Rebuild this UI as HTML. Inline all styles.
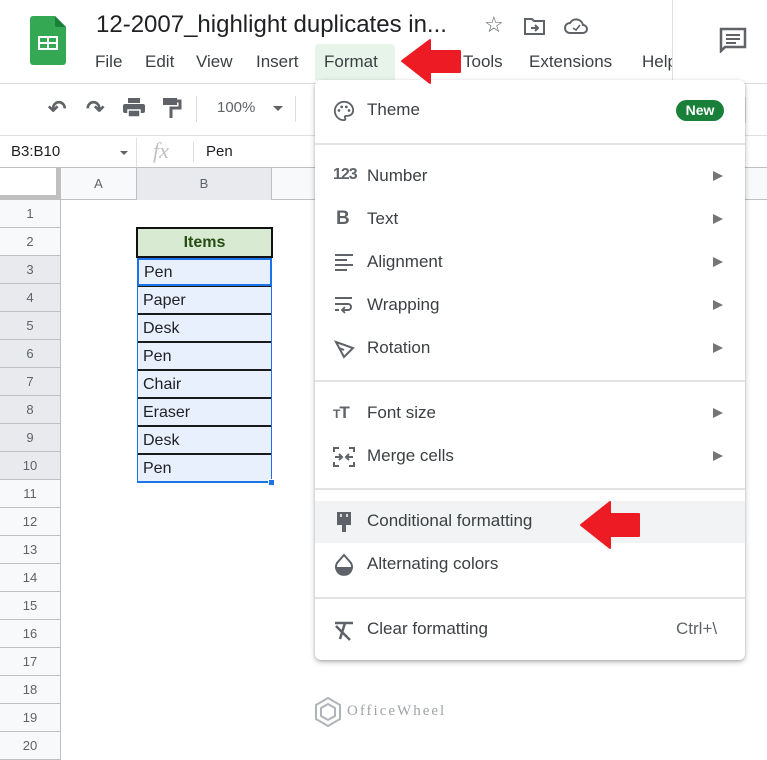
<!DOCTYPE html>
<html><head><meta charset="utf-8"><style>
*{margin:0;padding:0;box-sizing:border-box}
body{width:767px;height:750px;overflow:hidden;background:#fff;font-family:"Liberation Sans",Arial,sans-serif;position:relative;color:#3c4043}
.a{position:absolute}
.rh{position:absolute;left:0;width:61px;height:28px;border-bottom:1px solid #c0c0c0;border-right:1px solid #c0c0c0;background:#f8f9fa;font-size:13px;color:#5f6368;text-align:center;line-height:28px}
.rh.s{background:#e8eaed}
.cell{position:absolute;left:137px;width:135px;height:28px;background:#e8f0fe;border:1px solid #1a1a1a;font-size:16px;line-height:28px;padding-left:5px;color:#202124}
.mi{position:absolute;left:367px;font-size:17px;color:#3c4043}
.ar{position:absolute;left:713px;width:0;height:0;border-left:10px solid #757575;border-top:5px solid transparent;border-bottom:5px solid transparent}
.sep{position:absolute;left:315px;width:430px;height:2px;background:#e3e3e3}
.ic{position:absolute;left:333px}
</style></head><body>
<svg class="a" style="left:30px;top:16px" width="36" height="49" viewBox="0 0 36 49"><path d="M3 0H25L36 11V46a3 3 0 0 1-3 3H3a3 3 0 0 1-3-3V3a3 3 0 0 1 3-3z" fill="#34a853"/><path d="M25 0L36 11H27a2 2 0 0 1-2-2z" fill="#188038"/><rect x="8" y="20" width="20" height="14" fill="#fff"/><rect x="10" y="22" width="7" height="4" fill="#34a853"/><rect x="19" y="22" width="7" height="4" fill="#34a853"/><rect x="10" y="28" width="7" height="4" fill="#34a853"/><rect x="19" y="28" width="7" height="4" fill="#34a853"/></svg>
<div class="a" style="left:96px;top:11px;font-size:24px;color:#202124">12-2007_highlight duplicates in...</div>
<div class="a" style="left:484px;top:12px;font-size:22px;color:#5f6368">☆</div>
<svg class="a" style="left:524px;top:17px" width="22" height="18"><path d="M1 2h7l2 2h10v13H1z" fill="none" stroke="#5f6368" stroke-width="2"/><path d="M7 11h7M11 8l3 3-3 3" fill="none" stroke="#5f6368" stroke-width="2"/></svg>
<svg class="a" style="left:564px;top:17px" width="24" height="18"><path d="M6 16a5 5 0 0 1 0-10 7 7 0 0 1 13 2 4 4 0 0 1 0 8z" fill="none" stroke="#5f6368" stroke-width="2"/><path d="M9 11l3 2 4-5" fill="none" stroke="#5f6368" stroke-width="1.6"/></svg>
<div class="a" style="left:315px;top:44px;width:80px;height:36px;background:#e6f4ea;border-radius:4px 4px 0 0"></div>
<div class="a" style="left:95px;top:52px;font-size:17px;color:#3c4043"><span style="position:absolute;left:0">File</span><span style="position:absolute;left:50px">Edit</span><span style="position:absolute;left:101px">View</span><span style="position:absolute;left:161px">Insert</span><span style="position:absolute;left:229px">Format</span><span style="position:absolute;left:368px">Tools</span><span style="position:absolute;left:434px">Extensions</span><span style="position:absolute;left:547px;white-space:nowrap">Help</span></div>
<div class="a" style="left:672px;top:0;width:95px;height:84px;background:#fff;border-left:1px solid #e0e0e0"></div>
<svg class="a" style="left:719px;top:27px" width="28" height="26"><path d="M2 2h24v18H6l-4 4z" fill="none" stroke="#5f6368" stroke-width="2.5"/><path d="M7 8h14M7 12h14M7 16h10" stroke="#5f6368" stroke-width="2"/></svg>
<div class="a" style="left:0;top:83px;width:767px;height:1px;background:#dadce0"></div>
<div class="a" style="left:48px;top:96px;font-size:22px;color:#5f6368;font-weight:bold">↶</div>
<div class="a" style="left:86px;top:96px;font-size:22px;color:#5f6368;font-weight:bold">↷</div>
<svg class="a" style="left:123px;top:98px" width="22" height="20"><rect x="5" y="0" width="12" height="5" fill="#5f6368"/><rect x="0" y="6" width="22" height="9" rx="2" fill="#5f6368"/><rect x="5" y="12" width="12" height="7" fill="#5f6368" stroke="#fff" stroke-width="1.5"/></svg>
<svg class="a" style="left:162px;top:97px" width="20" height="22"><rect x="1" y="1" width="14" height="7" fill="#5f6368"/><path d="M15 4h3v7H9v10" fill="none" stroke="#5f6368" stroke-width="3"/></svg>
<div class="a" style="left:196px;top:96px;width:1px;height:26px;background:#dadce0"></div>
<div class="a" style="left:217px;top:99px;font-size:15px;color:#5f6368">100%</div>
<div class="a" style="left:273px;top:106px;border-top:5px solid #5f6368;border-left:5px solid transparent;border-right:5px solid transparent"></div>
<div class="a" style="left:295px;top:96px;width:1px;height:26px;background:#dadce0"></div>
<div class="a" style="left:745px;top:97px;width:1px;height:26px;background:#dadce0"></div>
<div class="a" style="left:0;top:135px;width:767px;height:1px;background:#e0e0e0"></div>
<div class="a" style="left:11px;top:143px;font-size:15px;color:#202124">B3:B10</div>
<div class="a" style="left:120px;top:151px;border-top:4px solid #5f6368;border-left:4px solid transparent;border-right:4px solid transparent"></div>
<div class="a" style="left:136px;top:138px;width:1px;height:30px;background:#e0e0e0"></div>
<div class="a" style="left:153px;top:138px;font-size:22px;color:#c0c0c0;font-style:italic;font-family:'Liberation Serif',serif">fx</div>
<div class="a" style="left:193px;top:142px;width:1px;height:20px;background:#dadce0"></div>
<div class="a" style="left:206px;top:143px;font-size:15px;color:#202124">Pen</div>
<div class="a" style="left:0;top:167px;width:767px;height:1px;background:#c0c0c0"></div>
<div class="a" style="left:0;top:168px;width:767px;height:32px;background:#f8f9fa;border-bottom:1px solid #c0c0c0"></div>
<div class="a" style="left:0;top:168px;background:#fff;border-right:5px solid #c0c0c0;border-bottom:5px solid #c0c0c0;width:61px;height:32px"></div>
<div class="a" style="left:61px;top:168px;width:76px;height:32px;border-right:1px solid #c0c0c0;text-align:center;line-height:32px;font-size:13px;color:#5f6368">A</div>
<div class="a" style="left:137px;top:168px;width:135px;height:32px;background:#e8eaed;border-right:1px solid #c0c0c0;text-align:center;line-height:32px;font-size:13px;color:#5f6368">B</div>
<div class="rh" style="top:200px">1</div><div class="rh" style="top:228px">2</div>
<div class="rh s" style="top:256px">3</div><div class="rh s" style="top:284px">4</div><div class="rh s" style="top:312px">5</div><div class="rh s" style="top:340px">6</div><div class="rh s" style="top:368px">7</div><div class="rh s" style="top:396px">8</div><div class="rh s" style="top:424px">9</div><div class="rh s" style="top:452px">10</div>
<div class="rh" style="top:480px">11</div><div class="rh" style="top:508px">12</div><div class="rh" style="top:536px">13</div><div class="rh" style="top:564px">14</div><div class="rh" style="top:592px">15</div><div class="rh" style="top:620px">16</div><div class="rh" style="top:648px">17</div><div class="rh" style="top:676px">18</div><div class="rh" style="top:704px">19</div><div class="rh" style="top:732px">20</div>
<div class="a" style="left:136px;top:227px;width:137px;height:31px;background:#d9ead3;border:2px solid #111;text-align:center;font-weight:bold;font-size:16px;line-height:27px;color:#274e13">Items</div>
<div class="cell" style="top:258px;border:2px solid #1a73e8;line-height:25px">Pen</div>
<div class="cell" style="top:286px">Paper</div>
<div class="cell" style="top:314px">Desk</div>
<div class="cell" style="top:342px">Pen</div>
<div class="cell" style="top:370px">Chair</div>
<div class="cell" style="top:398px">Eraser</div>
<div class="cell" style="top:426px">Desk</div>
<div class="cell" style="top:454px;border-bottom:1px solid #1a73e8">Pen</div>
<div class="a" style="left:137px;top:258px;width:135px;height:225px;border:1px solid #1a73e8"></div>
<div class="a" style="left:268px;top:479px;width:7px;height:7px;background:#1a73e8;border:1px solid #fff"></div>
<div class="a" style="left:315px;top:80px;width:430px;height:580px;background:#fff;border-radius:6px;box-shadow:0 2px 6px rgba(0,0,0,.25),0 1px 2px rgba(0,0,0,.15)"></div>
<div class="a" style="left:315px;top:501px;width:430px;height:42px;background:#f1f3f4"></div>
<svg class="ic" style="top:100px" width="22" height="22" viewBox="0 0 24 24"><path d="M12 2a10 10 0 0 0 0 20c1 0 1.5-.7 1.5-1.5 0-.8-.6-1.1-.6-1.8 0-.8.6-1.4 1.4-1.4H16a6 6 0 0 0 6-6C22 6 17.5 2 12 2z" fill="none" stroke="#5f6368" stroke-width="2"/><circle cx="6.5" cy="11.5" r="1.5" fill="#5f6368"/><circle cx="9.5" cy="7.5" r="1.5" fill="#5f6368"/><circle cx="14.5" cy="7.5" r="1.5" fill="#5f6368"/><circle cx="17.5" cy="11.5" r="1.5" fill="#5f6368"/></svg>
<div class="mi" style="top:100px">Theme</div>
<div class="a" style="left:676px;top:100px;width:48px;height:21px;border-radius:11px;background:#188038;color:#fff;font-weight:bold;font-size:14px;text-align:center;line-height:21px">New</div>
<div class="sep" style="top:143px"></div>
<div class="ic" style="top:166px;font-size:16px;font-weight:bold;color:#5f6368;letter-spacing:-1px">123</div>
<div class="mi" style="top:166px">Number</div><div class="ar" style="top:171px"></div>
<div class="ic" style="top:208px;left:336px;font-size:19px;font-weight:bold;color:#5f6368">B</div>
<div class="mi" style="top:209px">Text</div><div class="ar" style="top:214px"></div>
<svg class="ic" style="top:252px" width="22" height="20"><path d="M2 3h18M2 8h12M2 13h18M2 18h12" stroke="#5f6368" stroke-width="2"/></svg>
<div class="mi" style="top:252px">Alignment</div><div class="ar" style="top:257px"></div>
<svg class="ic" style="top:295px" width="22" height="20"><path d="M2 3h17M2 9h13a3 3 0 0 1 0 6h-5M2 15h4" fill="none" stroke="#5f6368" stroke-width="2"/><path d="M12 12l-3 3 3 3" fill="none" stroke="#5f6368" stroke-width="1.8"/></svg>
<div class="mi" style="top:295px">Wrapping</div><div class="ar" style="top:300px"></div>
<svg class="ic" style="top:337px" width="22" height="22"><path d="M3 5l17 6-9 9zM6 11l5 2" fill="none" stroke="#5f6368" stroke-width="2"/></svg>
<div class="mi" style="top:338px">Rotation</div><div class="ar" style="top:343px"></div>
<div class="sep" style="top:380px"></div>
<div class="ic" style="top:403px;font-size:17px;font-weight:bold;color:#5f6368;letter-spacing:-1px"><span style="font-size:12px">T</span>T</div>
<div class="mi" style="top:403px">Font size</div><div class="ar" style="top:408px"></div>
<svg class="ic" style="top:446px" width="22" height="22"><path d="M1 6V2h5M21 6V2h-5M1 16v4h5M21 16v4h-5M2 11h7M6 8l3 3-3 3M20 11h-7M16 8l-3 3 3 3" fill="none" stroke="#5f6368" stroke-width="2"/></svg>
<div class="mi" style="top:446px">Merge cells</div><div class="ar" style="top:451px"></div>
<div class="sep" style="top:488px"></div>
<svg class="ic" style="top:511px" width="22" height="22"><path d="M4 1h14v10H4z" fill="#5f6368"/><path d="M8 3v3M14 3v3" stroke="#fff" stroke-width="1.5"/><path d="M4 11h14v3H4z" fill="#5f6368"/><rect x="9" y="14" width="4" height="7" fill="#5f6368"/></svg>
<div class="mi" style="top:511px">Conditional formatting</div>
<svg class="ic" style="top:553px" width="22" height="24"><path d="M11 2L4 10a8 8 0 1 0 14 0z" fill="none" stroke="#5f6368" stroke-width="2"/><path d="M3 14h16a8 8 0 0 1-16 0z" fill="#5f6368"/></svg>
<div class="mi" style="top:554px">Alternating colors</div>
<div class="sep" style="top:597px"></div>
<svg class="ic" style="top:620px" width="22" height="22"><path d="M2 3h18M12 3l-5 16M3 6l14 14" fill="none" stroke="#5f6368" stroke-width="2.5"/></svg>
<div class="mi" style="top:619px">Clear formatting</div>
<div class="a" style="left:676px;top:619px;font-size:17px;color:#5f6368">Ctrl+\</div>
<svg class="a" style="left:400px;top:38px" width="62" height="46"><path d="M2 23L30 2v11h30v21H30v11z" fill="#ed1c24" stroke="#ed1c24" stroke-width="2" stroke-linejoin="round"/></svg>
<svg class="a" style="left:579px;top:500px" width="62" height="50"><path d="M2 25L31 2v12h29v22H31v12z" fill="#ed1c24" stroke="#ed1c24" stroke-width="2" stroke-linejoin="round"/></svg>
<svg class="a" style="left:313px;top:696px" width="30" height="32"><path d="M15 2l12 7v14l-12 7-12-7V9z M15 8l7 4v8l-7 4-7-4v-8z" fill="none" stroke="#b0b4b8" stroke-width="2"/></svg>
<div class="a" style="left:347px;top:703px;font-size:15px;color:#a0a4a8;letter-spacing:2px;font-family:'Liberation Serif',serif">OfficeWheel</div>
</body></html>
